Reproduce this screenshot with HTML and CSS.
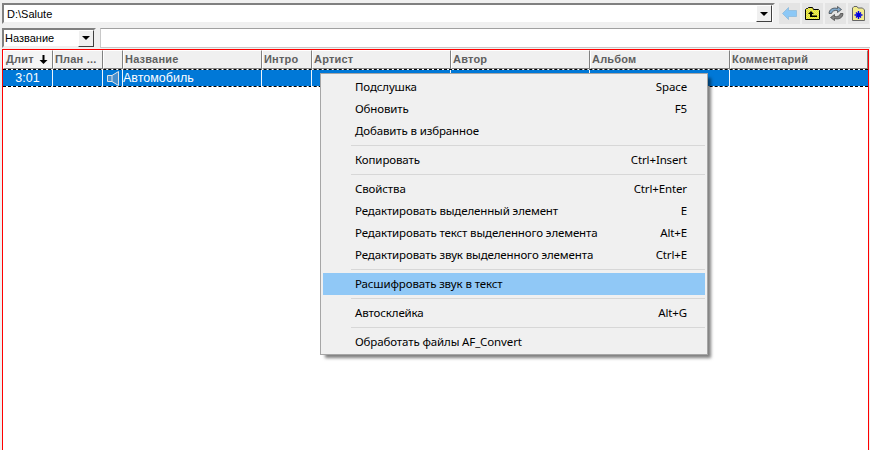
FILE: index.html
```html
<!DOCTYPE html>
<html lang="ru">
<head>
<meta charset="utf-8">
<title>Salute</title>
<link rel="stylesheet" href="styles.css">
</head>
<body>
<svg class="defs" width="0" height="0"><defs><pattern id="dither" width="2" height="2" patternUnits="userSpaceOnUse"><rect width="2" height="2" fill="#f6f200"/><rect width="1" height="1" fill="#d8d890"/><rect x="1" y="1" width="1" height="1" fill="#d8d890"/></pattern></defs></svg>
<div class="toolbar">
  <div class="combo path"><span class="combo-text">D:\Salute</span><span class="drop"><i></i></span></div>
  <div class="tools">
    <span class="tool"><svg width="15" height="13" viewBox="0 0 15 13"><path d="M.5 6.500 6.500 .5V3.500H14.500V9.500H6.500V12.500Z" fill="#8cc8f6" stroke="#86b6da" stroke-width=".7"/></svg></span>
    <span class="tool"><svg width="15" height="13" viewBox="0 0 15 13"><path d="M.5 12.500V2.500L1.500 1.500H2.500L3.500 .5H7.500L8.500 2.500H13.500L14.500 3.500V12.500Z" fill="url(#dither)" stroke="#000"/><path d="M6 4 3 7H5V10H12V8.500H7V7H9Z" fill="#000"/></svg></span>
    <span class="tool"><svg width="16" height="15" viewBox="0 0 16 15"><path d="M1 7.500C1 3.500 5 1 9.500 2.500V.5L13.500 3.500 9.500 6.500V4.500C7 4 4 5 3.500 7.500Z" fill="#7fa6c8" stroke="#3d3d3d" stroke-width=".7"/><path d="M15 7.500C15 11.500 11 14 6.500 12.500V14.500L2.500 11.500 6.500 8.500V10.500C9 11 12 10 12.500 7.500Z" fill="#808080" stroke="#3d3d3d" stroke-width=".7"/></svg></span>
    <span class="tool"><svg width="13" height="15" viewBox="0 0 13 15"><path d="M.5 14.500V2L2 .5H5L6 2H10.500L12.500 4V14.500Z" fill="#f2ec8c" stroke="#666"/><path d="M6.500 5V13M2.500 9H10.500M4 6.500 9 11.500M9 6.500 4 11.500" stroke="#0000e0" stroke-width="1.400"/></svg></span>
  </div>
</div>
<div class="filter">
  <div class="combo field"><span class="combo-text">Название</span><span class="drop"><i></i></span></div>
  <div class="search"></div>
</div>
<div class="list">
  <div class="head">
    <div class="th sorted">Длит<svg class="sort" width="9" height="9" viewBox="0 0 9 9"><path d="M3.500 0H5.500V5H8.500L4.500 9 .5 5H3.500Z" fill="#000"/></svg></div>
    <div class="th">План ...</div>
    <div class="th"></div>
    <div class="th">Название</div>
    <div class="th">Интро</div>
    <div class="th">Артист</div>
    <div class="th">Автор</div>
    <div class="th">Альбом</div>
    <div class="th">Комментарий</div>
  </div>
  <div class="row">
    <div class="td time">3:01</div>
    <div class="td"></div>
    <div class="td icon"><svg width="12" height="15" viewBox="0 0 12 15"><path d="M.5 4.500H5L11.500 .5V14.500L5 10.500H.5Z" fill="#4a90cc" stroke="#e4e4e4"/><path d="M5 4.500V10.500" stroke="#e4e4e4"/></svg></div>
    <div class="td name">Автомобиль</div>
    <div class="td"></div>
    <div class="td"></div>
    <div class="td"></div>
    <div class="td"></div>
    <div class="td last"></div>
  </div>
</div>
<div class="menu">
  <div class="item"><span>Подслушка</span><span>Space</span></div>
  <div class="item"><span>Обновить</span><span>F5</span></div>
  <div class="item"><span>Добавить в избранное</span></div>
  <div class="sep"></div>
  <div class="item"><span>Копировать</span><span>Ctrl+Insert</span></div>
  <div class="sep"></div>
  <div class="item"><span>Свойства</span><span>Ctrl+Enter</span></div>
  <div class="item"><span>Редактировать выделенный элемент</span><span>E</span></div>
  <div class="item"><span>Редактировать текст выделенного элемента</span><span>Alt+E</span></div>
  <div class="item"><span>Редактировать звук выделенного элемента</span><span>Ctrl+E</span></div>
  <div class="sep"></div>
  <div class="item active"><span>Расшифровать звук в текст</span></div>
  <div class="sep"></div>
  <div class="item"><span>Автосклейка</span><span>Alt+G</span></div>
  <div class="sep"></div>
  <div class="item"><span>Обработать файлы AF_Convert</span></div>
</div>
</body>
</html>
```
FILE: styles.css
```css
* { box-sizing: border-box; }
html, body { height: 100%; }
body {
  margin: 0;
  width: 870px;
  height: 450px;
  overflow: hidden;
  background: #f0f0f0;
  font-family: "Liberation Sans", Arial, sans-serif;
  font-size: 12px;
  color: #000;
  display: flex;
  flex-direction: column;
  position: relative;
}
.defs { position: absolute; }
.toolbar {
  height: 28px;
  flex: none;
  padding: 3px 0 0 2px;
  display: flex;
  align-items: flex-start;
  background: #f0f0f0;
}
.combo {
  height: 21px;
  background: #fff;
  border: 2px solid;
  border-color: #808080 #f0f0f0 #f0f0f0 #808080;
  display: flex;
  align-items: center;
  justify-content: space-between;
  font-size: 11px;
}
.combo-text { padding-left: 3px; }
.path { width: 773px; }
.path .drop { margin-right: 1px; }
.drop {
  width: 16px;
  height: 17px;
  background: #f0f0f0;
  border: 1px solid;
  border-color: #fff #404040 #404040 #fff;
  display: flex;
  align-items: center;
  justify-content: center;
}
.drop i {
  width: 0;
  height: 0;
  border: 4px solid transparent;
  border-top-color: #000;
  border-bottom-width: 0;
}
.tools {
  display: flex;
  gap: 2px;
  margin-left: 4px;
}
.tool {
  width: 21px;
  height: 21px;
  background: #e4e4e4;
  display: flex;
  align-items: center;
  justify-content: center;
}
.filter {
  height: 21px;
  flex: none;
  display: flex;
  padding-left: 2px;
  gap: 4px;
  background: #f0f0f0;
}
.field { width: 94px; height: 20px; }
.field .combo-text { padding-left: 1px; }
.search {
  flex: 1;
  height: 20px;
  background: #fff;
  border: 1px solid #c8c8c8;
  border-top-color: #a0a0a0;
  border-right: 0;
}
.list {
  flex: 1;
  margin-left: 2px;
  width: 867px;
  background: #fff;
  border: 1px solid #f00;
  border-bottom: 0;
}
.head, .row {
  display: grid;
  grid-template-columns: 50px 50px 20px 139px 50px 139px 139px 140px 138px;
}
.head { height: 19px; background: #f0f0f0; }
.th {
  border: 1px solid;
  border-color: #fff #808080 #808080 #fff;
  background: #f0f0f0;
  color: #5f5f5f;
  font-size: 11px;
  font-weight: bold;
  line-height: 17px;
  padding-left: 1px;
  letter-spacing: .2px;
  white-space: nowrap;
  overflow: hidden;
}
.sorted {
  display: flex;
  align-items: center;
  justify-content: space-between;
  padding: 0 4px 0 2px;
  background: #f5f5f5;
}
.row {
  height: 18px;
  background: #0078d7;
  background-clip: padding-box;
  color: #fff;
  border-top: 1px dashed #000;
  border-bottom: 1px dashed #000;
  font-size: 12.5px;
}
.td {
  border-right: 1px solid #f0f6fc;
  line-height: 17px;
  white-space: nowrap;
}
.last { border-right: 0; }
.time { text-align: center; }
.icon { padding: 0 0 0 4px; display: flex; align-items: center; }
.menu {
  position: absolute;
  left: 320px;
  top: 73px;
  width: 388px;
  height: 282px;
  padding: 2px 2px;
  background: #f0f0f0;
  border: 1px solid #a6a6a6;
  box-shadow: 4px 4px 3px -1px rgba(0,0,0,.5);
  font-family: "Noto Sans", sans-serif;
  font-size: 11.5px;
  letter-spacing: -.13px;
  color: #000;
}
.item {
  height: 22px;
  display: flex;
  align-items: center;
  justify-content: space-between;
  padding: 0 18px 2px 32px;
  white-space: nowrap;
}
.active { background: #90c8f6; }
.sep {
  height: 7px;
  margin-left: 28px;
  position: relative;
}
.sep::before {
  content: "";
  position: absolute;
  left: 0;
  right: 0;
  top: 3px;
  height: 1px;
  background: #d7d7d7;
}
```
